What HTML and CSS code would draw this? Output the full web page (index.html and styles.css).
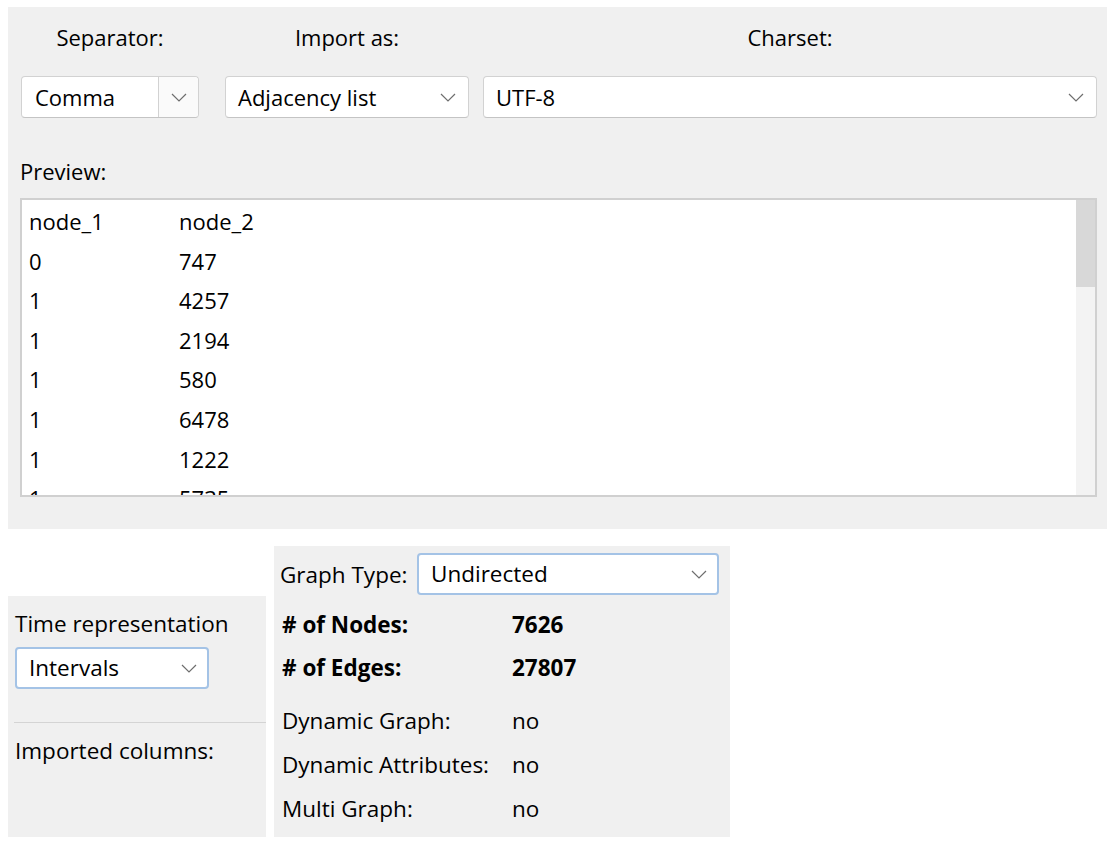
FILE: index.html
```html
<!DOCTYPE html>
<html>
<head>
<meta charset="utf-8">
<link rel="stylesheet" href="styles.css">
</head>
<body>
<div class="dialog">
  <div class="fields">
    <div class="field field-sep">
      <div class="field-label">Separator:</div>
      <div class="combo combo-split">
        <span class="combo-value">Comma</span>
        <span class="combo-btn"><svg class="chev" width="16" height="9" viewBox="0 0 16 9"><path d="M1 1 L8 8 L15 1" fill="none" stroke="#6e6e6e" stroke-width="1.2"/></svg></span>
      </div>
    </div>
    <div class="field field-import">
      <div class="field-label">Import as:</div>
      <div class="combo">
        <span class="combo-value">Adjacency list</span>
        <svg class="chev" width="16" height="9" viewBox="0 0 16 9"><path d="M1 1 L8 8 L15 1" fill="none" stroke="#6e6e6e" stroke-width="1.2"/></svg>
      </div>
    </div>
    <div class="field field-charset">
      <div class="field-label">Charset:</div>
      <div class="combo">
        <span class="combo-value">UTF-8</span>
        <svg class="chev" width="16" height="9" viewBox="0 0 16 9"><path d="M1 1 L8 8 L15 1" fill="none" stroke="#6e6e6e" stroke-width="1.2"/></svg>
      </div>
    </div>
  </div>
  <div class="preview-label">Preview:</div>
  <div class="preview">
    <div class="rows">
      <div class="row"><span class="c1">node_1</span><span>node_2</span></div>
      <div class="row"><span class="c1">0</span><span>747</span></div>
      <div class="row"><span class="c1">1</span><span>4257</span></div>
      <div class="row"><span class="c1">1</span><span>2194</span></div>
      <div class="row"><span class="c1">1</span><span>580</span></div>
      <div class="row"><span class="c1">1</span><span>6478</span></div>
      <div class="row"><span class="c1">1</span><span>1222</span></div>
      <div class="row"><span class="c1">1</span><span>5735</span></div>
    </div>
    <div class="scrollbar"><div class="thumb"></div></div>
  </div>
</div>

<div class="bottom">
  <div class="time-panel">
    <div class="panel-text">Time representation</div>
    <div class="combo combo-focus combo-time">
      <span class="combo-value">Intervals</span>
      <svg class="chev" width="16" height="9" viewBox="0 0 16 9"><path d="M1 1 L8 8 L15 1" fill="none" stroke="#6e6e6e" stroke-width="1.2"/></svg>
    </div>
    <div class="divider"></div>
    <div class="panel-text">Imported columns:</div>
  </div>
  <div class="graph-panel">
    <div class="type-row">
      <span class="type-label">Graph Type:</span>
      <div class="combo combo-focus combo-type">
        <span class="combo-value">Undirected</span>
        <svg class="chev" width="16" height="9" viewBox="0 0 16 9"><path d="M1 1 L8 8 L15 1" fill="none" stroke="#6e6e6e" stroke-width="1.2"/></svg>
      </div>
    </div>
    <div class="info-row bold"><span class="info-key"># of Nodes:</span><span>7626</span></div>
    <div class="info-row bold"><span class="info-key"># of Edges:</span><span>27807</span></div>
    <div class="info-gap"></div>
    <div class="info-row"><span class="info-key">Dynamic Graph:</span><span>no</span></div>
    <div class="info-row"><span class="info-key">Dynamic Attributes:</span><span>no</span></div>
    <div class="info-row"><span class="info-key">Multi Graph:</span><span>no</span></div>
  </div>
</div>
</body>
</html>
```

FILE: styles.css
```css
* { box-sizing: border-box; }

body {
  margin: 0;
  background: #ffffff;
  font-family: "Open Sans", "Noto Sans", sans-serif;
  font-size: 22px;
  color: #000;
}

.dialog {
  margin: 7px 0 0 8px;
  width: 1099px;
  height: 522px;
  background: #f0f0f0;
  padding: 16px 10px 0 12px;
}

.fields {
  display: flex;
  align-items: flex-start;
}

.field {
  display: flex;
  flex-direction: column;
}

.field-label {
  height: 28px;
  line-height: 28px;
  text-align: center;
  margin-bottom: 25px;
}

.field-sep { width: 178px; margin-left: 1px; }
.field-import { width: 244px; margin-left: 26px; }
.field-charset { flex: 1; margin-left: 14px; }

.combo {
  height: 42px;
  background: #ffffff;
  border: 1.5px solid #d2d2d2;
  border-bottom-color: #c4c4c4;
  border-radius: 4px;
  display: flex;
  align-items: center;
  padding: 0 12px 0 12px;
}

.combo-value { flex: 1; line-height: 28px; white-space: nowrap; }

.chev { flex: none; display: block; }

.combo-split { padding: 0 0 0 13px; }
.combo-split .combo-btn {
  width: 40px;
  align-self: stretch;
  border-left: 1.5px solid #d2d2d2;
  background: #fafafa;
  border-radius: 0 4px 4px 0;
  display: flex;
  align-items: center;
  justify-content: center;
}

.preview-label {
  margin-top: 39px;
  height: 28px;
  line-height: 28px;
}

.preview {
  margin-top: 13px;
  height: 299px;
  background: #ffffff;
  border: 2px solid #d0d0d0;
  display: flex;
  overflow: hidden;
}

.rows {
  flex: 1;
  padding: 2px 0 0 7px;
  overflow: hidden;
}

.row {
  display: flex;
  height: 39.6px;
  line-height: 39.6px;
}

.c1 { width: 150px; }

.scrollbar {
  width: 20px;
  background: #f3f3f3;
  margin-right: -1px;
}

.thumb {
  height: 87px;
  background: #d8d8d8;
}

.bottom {
  display: flex;
  align-items: flex-end;
  margin: 17px 0 0 8px;
  gap: 8px;
  font-size: 22.5px;
}

.time-panel {
  width: 258px;
  height: 241px;
  background: #f0f0f0;
  padding-top: 14px;
}

.panel-text {
  height: 28px;
  line-height: 28px;
  padding-left: 7px;
  white-space: nowrap;
}

.combo-focus {
  border: 2px solid #a4c3e6;
  border-radius: 4px;
  padding-right: 10px;
}

.combo-time {
  margin: 9px 0 0 7px;
  width: 194px;
  padding-left: 12px;
}

.divider {
  margin: 33px 0 14px 6px;
  height: 1px;
  background: #d4d4d4;
}

.graph-panel {
  width: 456px;
  height: 291px;
  background: #f0f0f0;
  padding: 7px 11px 0 6px;
}

.type-row {
  display: flex;
  align-items: center;
}

.type-label {
  width: 137px;
  white-space: nowrap;
}

.combo-type {
  flex: 1;
  padding-left: 12px;
}

.info-row {
  display: flex;
  height: 44px;
  line-height: 44px;
  padding-left: 2px;
}

.type-row + .info-row { margin-top: 8px; }

.info-row.bold { font-weight: 700; height: 43px; line-height: 43px; }

.info-gap { height: 10px; }

.info-key { width: 230px; white-space: nowrap; }
```
